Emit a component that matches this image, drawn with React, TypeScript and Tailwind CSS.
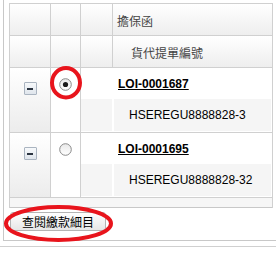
import React from "react";

const cjk = "font-['Noto_Sans_CJK_TC','Noto_Sans_CJK_SC',sans-serif]";

function MinusBtn() {
  return (
    <div className="w-[13px] h-[13px] border border-[#aab4c0] rounded-[1px] bg-gradient-to-b from-[#f7f9fb] to-[#dfe5ec] flex items-center justify-center">
      <div className="w-[6px] h-[2px] bg-[#2b3440]" />
    </div>
  );
}

function Radio({ checked }: { checked: boolean }) {
  return (
    <svg width="13" height="13" viewBox="0 0 13 13">
      <defs>
        <linearGradient id="rg" x1="0" y1="0" x2="0" y2="1">
          <stop offset="0" stopColor="#e8e8e8" />
          <stop offset="1" stopColor="#ffffff" />
        </linearGradient>
      </defs>
      <circle cx="6.5" cy="6.5" r="5.8" fill="url(#rg)" stroke="#8a8a8a" strokeWidth="1" />
      {checked && <circle cx="6.5" cy="6.5" r="2.6" fill="#1a1a1a" />}
    </svg>
  );
}

function Group({ loi, bl, checked }: { loi: string; bl: string; checked: boolean }) {
  return (
    <div className="flex border-b border-[#d0d0d0]">
      <div className="w-[41px] border-r border-[#d0d0d0] bg-gradient-to-b from-white to-[#ececec] flex justify-center pt-[14px]">
        <MinusBtn />
      </div>
      <div className="w-[30px] border-r border-[#d0d0d0] bg-white flex justify-center pt-[10px]">
        <Radio checked={checked} />
      </div>
      <div className="flex-1 flex flex-col">
        <div className="h-[31px] bg-white flex items-center pl-[37px] font-['Liberation_Sans',Arial,sans-serif] text-[12px] font-bold underline text-black">
          {loi}
        </div>
        <div className="h-[33px] flex bg-white pb-[1px] pr-[1px]">
          <div className="w-[31px] bg-[#f5f5f5]" />
          <div className="ml-[2px] flex-1 bg-[#f5f5f5] flex items-center pl-[15px] font-['Liberation_Sans',Arial,sans-serif] text-[12px] text-black">
            {bl}
          </div>
        </div>
      </div>
    </div>
  );
}

export default function App() {
  return (
    <div className="w-[276px] h-[254px] bg-white relative overflow-hidden">
      <div className="ml-[3px] border-l border-b border-[#c8c8c8] pl-[5px] pt-[3px] h-[241px]">
        <div className="w-[264px] border-t border-l border-r border-[#d0d0d0]">
          {/* header row 1 */}
          <div className="flex h-[32px] border-b border-[#d0d0d0] bg-gradient-to-b from-white to-[#eeeeee]">
            <div className="w-[41px] border-r border-[#d0d0d0]" />
            <div className="w-[30px] border-r border-[#d0d0d0]" />
            <div className="w-[32px] border-r border-[#d0d0d0]" />
            <div className={`flex-1 flex items-center pl-[4px] pt-[2px] text-[12px] text-[#444] ${cjk}`}>擔保函</div>
          </div>
          {/* header row 2 */}
          <div className="flex h-[32px] border-b border-[#d0d0d0] bg-gradient-to-b from-white to-[#eeeeee]">
            <div className="w-[41px] border-r border-[#d0d0d0]" />
            <div className="w-[30px] border-r border-[#d0d0d0]" />
            <div className="w-[32px] border-r border-[#d0d0d0]" />
            <div className={`flex-1 flex items-center pl-[18px] pt-[2px] text-[12px] text-[#444] ${cjk}`}>貨代提單編號</div>
          </div>
          <Group loi="LOI-0001687" bl="HSEREGU8888828-3" checked={true} />
          <Group loi="LOI-0001695" bl="HSEREGU8888828-32" checked={false} />
          <div className="h-[10px] bg-[#f6f6f6] border-b border-[#c8c8c8]" />
        </div>
        <div className="mt-[4px] pl-[1px]">
          <button className={`h-[19px] w-[96px] border border-[#b4b4b4] rounded-[3px] bg-gradient-to-b from-white to-[#e6e6e6] text-[12px] leading-none text-black flex items-center justify-center ${cjk}`}>
            查閱繳款細目
          </button>
        </div>
      </div>
      <div className="mt-[5px] border-t border-[#d0d0d0]" />
      <svg className="absolute left-0 top-0 pointer-events-none" width="276" height="254">
        <ellipse cx="66" cy="82.7" rx="14" ry="14.7" fill="none" stroke="#e8141c" strokeWidth="4" />
        <ellipse cx="58.5" cy="223.5" rx="52.5" ry="16.5" fill="none" stroke="#e8141c" strokeWidth="4" />
      </svg>
    </div>
  );
}
